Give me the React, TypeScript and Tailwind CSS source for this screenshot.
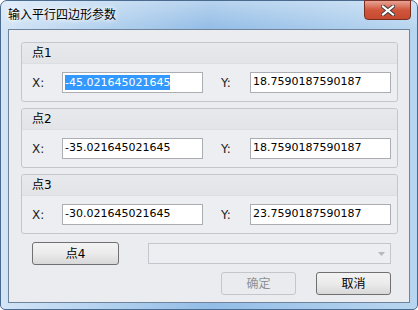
import React from "react";

const cjk = "font-['Segoe_UI','DejaVu_Sans','Noto_Sans_CJK_SC',sans-serif]";

function Field({ label, value, selected }: { label: string; value: string; selected?: boolean }) {
  return (
    <div className="flex items-center">
      <span className="w-[30px] text-[12px] text-[#1e1e1e]">{label}</span>
      <div className="w-[141px] h-[21px] border border-[#abadb3] bg-white flex items-center pl-[2px] text-[11px] text-black font-['DejaVu_Sans',sans-serif]">
        {selected ? <span className="bg-[#3399ff] text-white leading-[15px]">{value}</span> : <span>{value}</span>}
      </div>
    </div>
  );
}

function Group({ title, x, y }: { title: string; x: string; y: string; sel?: boolean }) {
  return (
    <div className="h-[60px] border border-[#c3c6cb] rounded-[3px] flex flex-col bg-[#eceef1]">
      <div className="h-[21px] flex items-center pl-[10px] text-[12px] text-black bg-gradient-to-b from-[#e7e9ec] to-[#e2e4e8] border-b border-[#dcdee2] rounded-t-[3px]">
        {title}
      </div>
      <div className="flex-1 flex items-center justify-between pl-[10px] pr-[6px]">
        <Field label="X:" value={x} selected={title === "点1"} />
        <div className="flex items-center">
          <span className="w-[29px] text-[12px] text-[#1e1e1e]">Y:</span>
          <div className="w-[141px] h-[21px] border border-[#abadb3] bg-white flex items-center pl-[2px] text-[11px] text-black font-['DejaVu_Sans',sans-serif]">
            {y}
          </div>
        </div>
      </div>
    </div>
  );
}

function Btn({ children, w, disabled }: { children: React.ReactNode; w: string; disabled?: boolean }) {
  return (
    <div
      className={`${w} h-[23px] rounded-[3px] border flex items-center justify-center text-[12px] ${
        disabled
          ? "border-[#c3c6cb] bg-[#e9ebee] text-[#8d9196]"
          : "border-[#707070] bg-gradient-to-b from-[#f3f3f3] via-[#ebebeb] to-[#d8d8d8] text-black"
      }`}
    >
      {children}
    </div>
  );
}

export default function App() {
  return (
    <div className={`w-[418px] h-[310px] ${cjk}`}>
      <div className="w-[418px] h-[310px] rounded-t-[7px] rounded-b-[5px] border border-[#4a6a8f] bg-gradient-to-r from-[#d3e5f6] via-[#93bde6] to-[#b9d6f0] flex flex-col">
        <div className="h-[28px] relative flex items-center pl-[7px] rounded-t-[6px] bg-gradient-to-b from-[#ffffff55] to-transparent">
          <span className="text-[12px] text-black [text-shadow:0_0_6px_#ffffff,0_0_4px_#ffffff]">输入平行四边形参数</span>
          <div className="absolute right-[6px] top-[-1px] w-[47px] h-[20px] rounded-b-[4px] border border-[#7a2e22] bg-gradient-to-b from-[#e6a394] via-[#d0553b] to-[#c64a2f] flex items-center justify-center">
            <svg width="14" height="11" viewBox="0 0 14 11">
              <path d="M2 1.5 L12 9.5 M12 1.5 L2 9.5" stroke="#3a3a3a" strokeWidth="4" strokeLinecap="square" />
              <path d="M2 1.5 L12 9.5 M12 1.5 L2 9.5" stroke="#ffffff" strokeWidth="2.2" strokeLinecap="square" />
            </svg>
          </div>
        </div>
        <div className="mx-[7px] mb-[6px] flex-1 border border-[#6f839b] bg-[#eaecef] pt-[12px] pl-[12px] pr-[11px] flex flex-col">
          <div className="flex flex-col gap-[6px]">
            <Group title="点1" x="-45.021645021645" y="18.7590187590187" />
            <Group title="点2" x="-35.021645021645" y="18.7590187590187" />
            <Group title="点3" x="-30.021645021645" y="23.7590187590187" />
          </div>
          <div className="flex items-center mt-[8px] pl-[11px]">
            <Btn w="w-[87px]">点4</Btn>
            <div className="ml-[29px] w-[243px] h-[21px] border border-[#c3c6cb] bg-[#eceef1] flex items-center justify-end pr-[5px]">
              <svg width="7" height="4" viewBox="0 0 7 4">
                <path d="M0 0 H7 L3.5 4 Z" fill="#b5b8bc" />
              </svg>
            </div>
          </div>
          <div className="flex justify-end gap-[20px] mt-[7px] pr-[7px]">
            <Btn w="w-[75px]" disabled>
              确定
            </Btn>
            <Btn w="w-[75px]">取消</Btn>
          </div>
        </div>
      </div>
    </div>
  );
}
